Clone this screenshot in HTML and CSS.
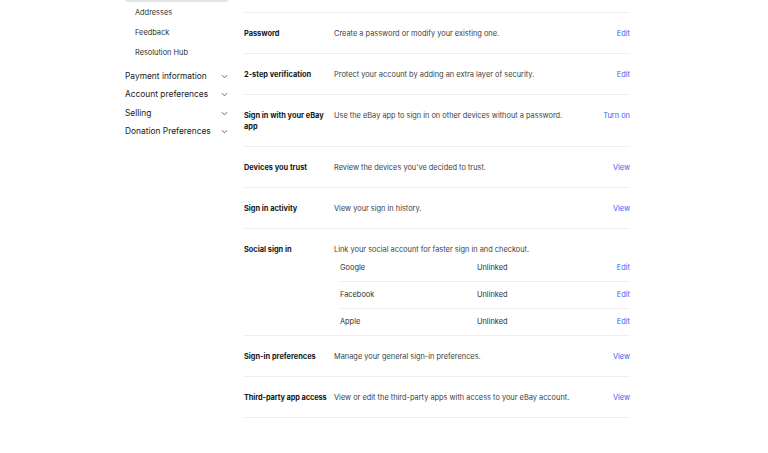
FILE: index.html
```html
<!DOCTYPE html>
<html lang="en">
<head>
    <meta charset="UTF-8">
    <meta name="viewport" content="width=device-width, initial-scale=1.0">
    <title>Sign in and security</title>
    <link rel="stylesheet" href="styles.css">
</head>
<body>
    <div class="page">
        <div class="sidebar">
            <div class="side-active"></div>
            <a class="side-sub" href="#">Addresses</a>
            <a class="side-sub" href="#">Feedback</a>
            <a class="side-sub" href="#">Resolution Hub</a>

            <div class="side-groups">
                <div class="side-group">
                    <span>Payment information</span>
                    <svg class="chevron" viewBox="0 0 8 5"><polyline points="1,1 4,4 7,1"/></svg>
                </div>
                <div class="side-group">
                    <span>Account preferences</span>
                    <svg class="chevron" viewBox="0 0 8 5"><polyline points="1,1 4,4 7,1"/></svg>
                </div>
                <div class="side-group">
                    <span>Selling</span>
                    <svg class="chevron" viewBox="0 0 8 5"><polyline points="1,1 4,4 7,1"/></svg>
                </div>
                <div class="side-group">
                    <span>Donation Preferences</span>
                    <svg class="chevron" viewBox="0 0 8 5"><polyline points="1,1 4,4 7,1"/></svg>
                </div>
            </div>
        </div>

        <div class="main">
            <div class="row">
                <div class="row-label">Password</div>
                <div class="row-desc">Create a password or modify your existing one.</div>
                <a class="row-action" href="#">Edit</a>
            </div>
            <div class="row">
                <div class="row-label">2-step verification</div>
                <div class="row-desc">Protect your account by adding an extra layer of security.</div>
                <a class="row-action" href="#">Edit</a>
            </div>
            <div class="row">
                <div class="row-label">Sign in with your eBay app</div>
                <div class="row-desc">Use the eBay app to sign in on other devices without a password.</div>
                <a class="row-action" href="#">Turn on</a>
            </div>
            <div class="row">
                <div class="row-label">Devices you trust</div>
                <div class="row-desc">Review the devices you've decided to trust.</div>
                <a class="row-action" href="#">View</a>
            </div>
            <div class="row">
                <div class="row-label">Sign in activity</div>
                <div class="row-desc">View your sign in history.</div>
                <a class="row-action" href="#">View</a>
            </div>
            <div class="row row-social">
                <div class="row-label">Social sign in</div>
                <div class="row-desc social-desc">
                    Link your social account for faster sign in and checkout.
                    <div class="social-list">
                        <div class="social-item">
                            <span class="social-name">Google</span>
                            <span class="social-status">Unlinked</span>
                            <a class="row-action" href="#">Edit</a>
                        </div>
                        <div class="social-item">
                            <span class="social-name">Facebook</span>
                            <span class="social-status">Unlinked</span>
                            <a class="row-action" href="#">Edit</a>
                        </div>
                        <div class="social-item">
                            <span class="social-name">Apple</span>
                            <span class="social-status">Unlinked</span>
                            <a class="row-action" href="#">Edit</a>
                        </div>
                    </div>
                </div>
            </div>
            <div class="row">
                <div class="row-label">Sign-in preferences</div>
                <div class="row-desc">Manage your general sign-in preferences.</div>
                <a class="row-action" href="#">View</a>
            </div>
            <div class="row">
                <div class="row-label nowrap">Third-party app access</div>
                <div class="row-desc">View or edit the third-party apps with access to your eBay account.</div>
                <a class="row-action" href="#">View</a>
            </div>
        </div>
    </div>
</body>
</html>
```

FILE: styles.css
```css
* {
    margin: 0;
    padding: 0;
    box-sizing: border-box;
}

body {
    background-color: #ffffff;
    color: #111820;
    font-family: Inter, 'Open Sans', sans-serif;
    font-size: 7.4px;
    line-height: 11px;
}

a {
    text-decoration: none;
}

.page {
    display: flex;
    gap: 16px;
    padding-left: 125px;
}

/* left navigation */
.sidebar {
    width: 103px;
    flex-shrink: 0;
}

.side-active {
    height: 2px;
    background-color: #e5e5e5;
    border-radius: 0 0 2px 2px;
}

.side-sub {
    display: block;
    height: 20px;
    color: #2f2f2f;
    font-size: 7.4px;
    padding: 5px 10px 4px;
}

.side-groups {
    margin-top: 5px;
}

.side-group {
    display: flex;
    justify-content: space-between;
    align-items: center;
    height: 18.5px;
    font-size: 8.4px;
    color: #191919;
}

.chevron {
    width: 7px;
    height: 5px;
    fill: none;
    stroke: #555555;
    stroke-width: 1;
}

/* settings list */
.main {
    width: 386px;
    padding-top: 12px;
}

.row {
    display: grid;
    grid-template-columns: 90px 1fr auto;
    align-items: start;
    padding: 15px 0 14px;
    border-top: 1px solid #efefef;
}

.row:last-child {
    border-bottom: 1px solid #efefef;
}

.row-label {
    font-weight: 700;
    color: #111820;
    padding-right: 4px;
}

.nowrap {
    white-space: nowrap;
    letter-spacing: -0.1px;
}

.row-desc {
    color: #41413f;
}

.row-action {
    color: #3665f3;
    text-align: right;
    padding-left: 20px;
}

.row-social {
    padding-bottom: 0;
}

.social-desc {
    grid-column: 2 / 4;
}

.social-list {
    margin-left: 6px;
}

.social-item {
    display: grid;
    grid-template-columns: 137px 1fr auto;
    padding: 7px 0 8px;
    color: #2f2f2f;
}

.social-item + .social-item {
    border-top: 1px solid #efefef;
}
```
